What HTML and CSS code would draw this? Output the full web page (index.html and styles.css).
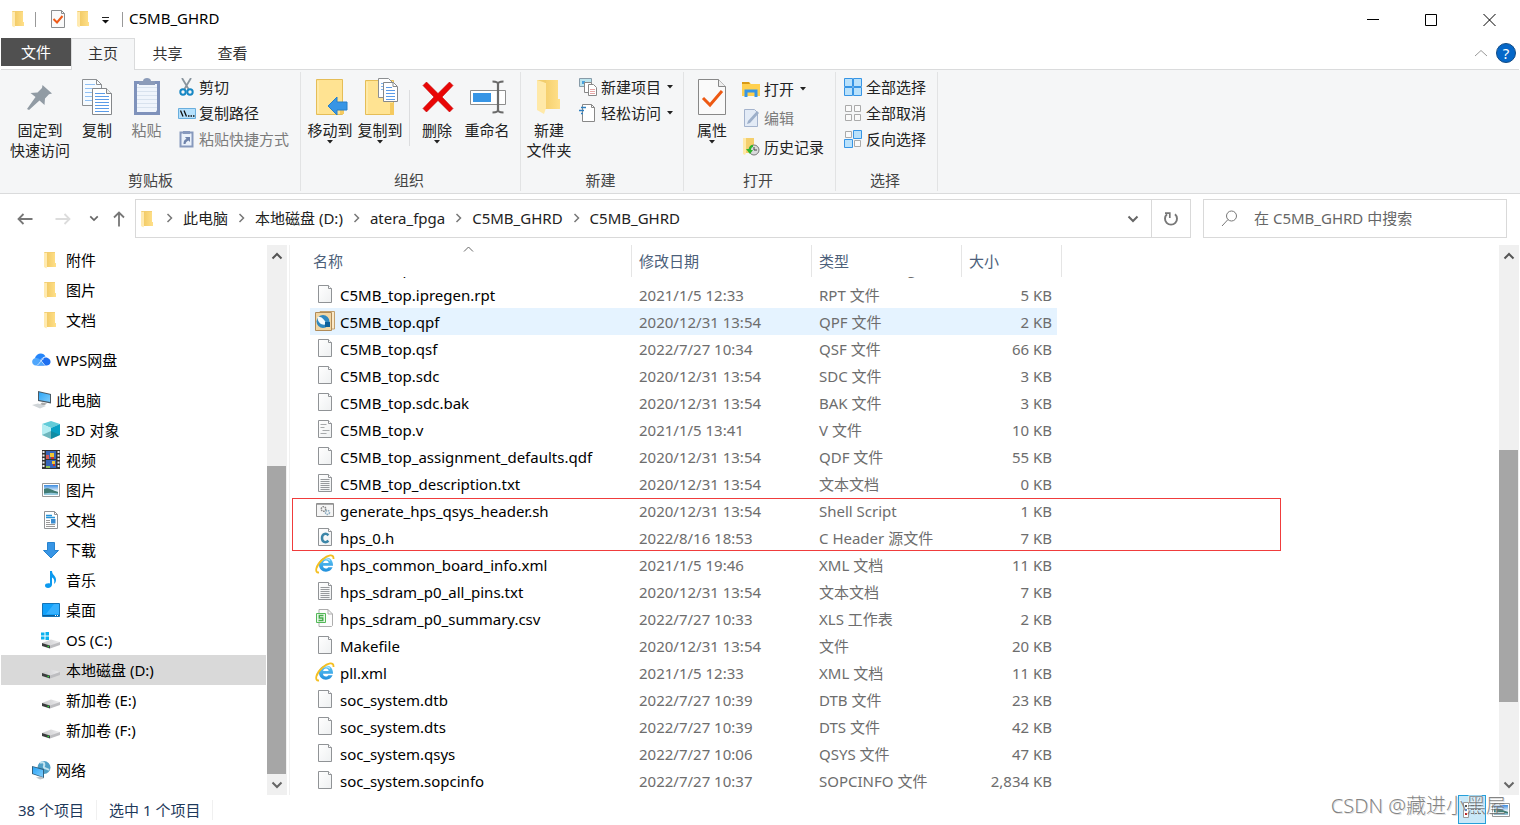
FILE: index.html
```html
<!DOCTYPE html>
<html lang="zh-CN">
<head>
<meta charset="utf-8">
<title>C5MB_GHRD</title>
<link rel="stylesheet" href="styles.css">
</head>
<body>
<svg class="sprite" aria-hidden="true">
  <defs>
    <linearGradient id="gFolder" x1="0" y1="0" x2="1" y2="0"><stop offset="0" stop-color="#f3cc68"/><stop offset="1" stop-color="#ffe08a"/></linearGradient>
    <linearGradient id="gPage" x1="0" y1="0" x2="1" y2="1"><stop offset="0" stop-color="#ffffff"/><stop offset="1" stop-color="#eef0f1"/></linearGradient>
    <linearGradient id="gBlue" x1="0" y1="0" x2="1" y2="1"><stop offset="0" stop-color="#2ba5f7"/><stop offset="1" stop-color="#7fccfb"/></linearGradient>
    <linearGradient id="gSky" x1="0" y1="0" x2="0" y2="1"><stop offset="0" stop-color="#3b8be0"/><stop offset=".6" stop-color="#e8f4fb"/><stop offset="1" stop-color="#3d7a86"/></linearGradient>
    <linearGradient id="gDisk" x1="0" y1="0" x2="1" y2="0"><stop offset="0" stop-color="#c9c9cb"/><stop offset="1" stop-color="#ececee"/></linearGradient>
    <linearGradient id="gIe" x1="0" y1="0" x2="0" y2="1"><stop offset="0" stop-color="#63c8f5"/><stop offset="1" stop-color="#1f8fdc"/></linearGradient>
  </defs>
  <symbol id="folder" viewBox="0 0 18 18"><path d="M6 1h8v11h1v4H6z" fill="url(#gFolder)"/><path d="M3 1h3v14l-.5 2.600L3 16z" fill="#ffeab0"/><path d="M3 1h11v.7H6L4 2z" fill="#f2cd70"/></symbol>
  <symbol id="page" viewBox="0 0 18 18"><path d="M2.500.5h10l3 3v14h-13z" fill="url(#gPage)" stroke="#909396"/><path d="M12.500.5v3h3" fill="#fff" stroke="#909396"/></symbol>
  <symbol id="pagelines" viewBox="0 0 18 18"><use href="#page"/><path d="M4.500 5.500h9M4.500 7.500h9M4.500 9.500h9M4.500 11.500h9M4.500 13.500h9M4.500 15.500h9" stroke="#979a9d"/></symbol>
  <symbol id="pagecode" viewBox="0 0 18 18"><use href="#page"/><path d="M4.500 4.500h6M4.500 7.500h4M6.500 10.500h7M4.500 13.500h6" stroke="#a6a9ab"/></symbol>
  <symbol id="check" viewBox="0 0 18 20"><path d="M2.500 1.500h10l3 3v14h-13z" fill="#fafafa" stroke="#8b8d8f"/><path d="M12.500 1.500v3h3" fill="none" stroke="#8b8d8f"/><path d="M4.500 10l3.500 3.500L13.500 7" fill="none" stroke="#ee5a18" stroke-width="2"/></symbol>
  <symbol id="disk" viewBox="0 0 20 18"><path d="M1 12l9-3.500 9 2.500-9 4z" fill="url(#gDisk)"/><path d="M1 12l8 2.500v3L1 15z" fill="#3a3d3e"/><path d="M9 14.500l10-3.500v3l-10 3.500z" fill="#bdbdc0"/><path d="M6.500 14.800h1.500v1.500H6.500z" fill="#2fd43a"/></symbol>
  <symbol id="chev" viewBox="0 0 8 10"><path d="M1.500 1l4 4-4 4" fill="none" stroke="#777" stroke-width="1.500"/></symbol>
  <symbol id="down" viewBox="0 0 12 8"><path d="M1.500 1.500L6 6l4.500-4.500" fill="none" stroke="#666" stroke-width="2"/></symbol>
  <symbol id="up" viewBox="0 0 12 8"><path d="M1.500 6.500L6 2l4.500 4.500" fill="none" stroke="#555" stroke-width="2"/></symbol>
  <symbol id="tri" viewBox="0 0 6 4"><path d="M0 0h6L3 3.500z" fill="#222"/></symbol>
  <symbol id="ie" viewBox="0 0 20 20"><path d="M11 3.500a7 7 0 0 0-7 7.200c0 4 3 7 7 7 3.200 0 5.500-1.600 6.600-4.400h-4.300c-.5.8-1.300 1.200-2.400 1.200-1.700 0-2.800-1-2.900-2.700h10C18.200 6.800 15.500 3.500 11 3.500zM8.100 9c.3-1.500 1.400-2.400 2.900-2.400s2.500.9 2.700 2.400z" fill="url(#gIe)" fill-rule="evenodd"/><path d="M6 7.500c1.500-3 6-4 9-1" fill="none" stroke="#b4e8ff" stroke-width="1.200"/><path d="M4 18.500C-1 19 1 11 7.500 5.500 12.500 1.200 19-.8 18.500 5" fill="none" stroke="#f4bf22" stroke-width="1.800"/></symbol>
  <symbol id="photo" viewBox="0 0 18 14"><path d="M.5.5h17v13H.5z" fill="#fff" stroke="#999"/><path d="M2 2h14v10H2z" fill="url(#gSky)"/><path d="M2 6c4-2 7 1 14 3v3H2z" fill="#417c74"/><path d="M2 10.500c5-1 9-1 14 0V12H2z" fill="#94c9dd"/></symbol>
</svg>

<header class="titlebar">
  <svg class="i18"><use href="#folder"/></svg><span class="bar"></span>
  <svg class="i20"><use href="#check"/></svg>
  <svg class="i18"><use href="#folder"/></svg>
  <svg class="qat" viewBox="0 0 8 7"><path d="M0 .5h7" stroke="#222"/><path d="M0 3h7L3.500 6.500z" fill="#111"/></svg>
  <span class="bar bar2"></span>
  <h1>C5MB_GHRD</h1>
  <div class="winbtns">
    <button aria-label="最小化"><svg viewBox="0 0 13 13"><path d="M0 6.500h12" stroke="#000"/></svg></button>
    <button aria-label="最大化"><svg viewBox="0 0 13 13"><path d="M.5 1.500h11v11H.5z" fill="none" stroke="#000"/></svg></button>
    <button aria-label="关闭"><svg viewBox="0 0 13 13"><path d="M.5 1l12 12M12.500 1l-12 12" stroke="#000" fill="none"/></svg></button>
  </div>
</header>

<div class="tabs">
  <button class="tab file">文件</button>
  <button class="tab active">主页</button>
  <button class="tab">共享</button>
  <button class="tab">查看</button>
  <div class="help">
    <button aria-label="折叠功能区"><svg width="14" height="8" viewBox="0 0 14 8"><path d="M1 7l6-5.500L13 7" fill="none" stroke="#999"/></svg></button>
    <button class="q" aria-label="帮助">?</button>
  </div>
</div>

<section class="ribbon">
  <div class="group clip">
    <div class="tools">
      <button class="big w78"><span class="ico"><svg width="30" height="30" viewBox="0 0 30 30"><path d="M17.500 3L27 11.500l-3 .8-4 4.200-.5 6.500-5-4.500L4 28l-2-1 8.500-12L5.500 11l7-.5 4.500-4.500z" fill="#919ba4"/></svg></span><span>固定到</span><span>快速访问</span></button>
      <button class="big w36"><span class="ico"><svg width="32" height="38" viewBox="0 0 32 38"><path d="M1.500 1.500h14l5 5v21h-19z" fill="#f6fbff" stroke="#8c8f92"/><path d="M15.500 1.500v5h5" fill="none" stroke="#8c8f92"/><path d="M4 6.500h10M4 10.500h13M4 14.500h13M4 18.500h13M4 22.500h13" stroke="#8fc0f5"/><path d="M11.500 10.500h14l5 5v21h-19z" fill="#fff" stroke="#85888b"/><path d="M25.500 10.500v5h5" fill="#eee" stroke="#85888b"/><path d="M14 15.500h10M14 18.500h14M14 21.500h14M14 24.500h14M14 27.500h14M14 30.500h14M14 33.500h14" stroke="#5a9be8"/></svg></span><span>复制</span></button>
      <button class="big w64 off"><span class="ico"><svg width="28" height="38" viewBox="0 0 28 38"><path d="M1 3h26v34H1z" fill="#7f92bb"/><path d="M4 6h20v26l-1 2H4z" fill="#f0f5fc"/><path d="M4 9.500h20M4 13.500h20M4 17.500h20M4 21.500h20M4 25.500h20M4 29.500h20" stroke="#d8e2ee"/><path d="M6 3h4c0-4 8-4 8 0h4v4H6z" fill="#8b9bb9"/></svg></span><span>粘贴</span></button>
      <div class="smalls">
        <button><svg class="i18" viewBox="0 0 18 18"><path d="M4 0l6.500 11M13 0L6.500 11" stroke="#8a959e" stroke-width="1.800"/><circle cx="5" cy="14" r="2.700" fill="none" stroke="#1787c4" stroke-width="2"/><circle cx="12" cy="14" r="2.700" fill="none" stroke="#1787c4" stroke-width="2"/></svg>剪切</button>
        <button><svg class="i18" viewBox="0 0 18 18"><path d="M.5 4.500h17v10H.5z" fill="#b5e0fc" stroke="#69aedd"/><path d="M2.500 6.500l2.500 6M6 6.500l2.500 6" stroke="#111" stroke-width="1.300"/><path d="M10 12h1.500M12.500 12H14M15 12h1.500" stroke="#111" stroke-width="1.500"/></svg>复制路径</button>
        <button class="off"><svg class="i18" viewBox="0 0 18 18"><path d="M2.500 2.500h12v14h-12z" fill="#eaf1fa" stroke="#8799bd" stroke-width="2"/><path d="M5 1h7v3H5z" fill="#8799bd"/><path d="M5.500 14c0-3 1-4.500 3-5L7 7h5v5l-1.500-1.500C8.500 11.500 8 12 7.500 14z" fill="#6f83ab"/></svg>粘贴快捷方式</button>
      </div>
    </div>
    <h2>剪贴板</h2>
  </div>

  <div class="group org">
    <div class="tools">
      <button class="big w50"><span class="ico"><svg width="34" height="38" viewBox="0 0 34 38"><path d="M2.500 1.500h26v35h-26z" fill="#ffe392" stroke="#e5bd57"/><path d="M4 3v32" stroke="#fff1bd"/><path d="M26 24h4v12h-4z" fill="#f5ca60"/><path d="M14 28l9-9v5h10v8H23v5z" fill="#3795e5" stroke="#267fc9"/></svg></span><span>移动到</span><svg class="tri"><use href="#tri"/></svg></button>
      <button class="big w50"><span class="ico"><svg width="34" height="40" viewBox="0 0 34 40"><path d="M1.500 3.500h28v34h-28z" fill="#ffe392" stroke="#e5bd57"/><path d="M3 5v32" stroke="#fff1bd"/><path d="M26 26h4v12h-4z" fill="#f5ca60"/><path d="M14.500 1.500h10l4 4v15h-14z" fill="#fff" stroke="#8c8f92"/><path d="M17 6.500h6M17 9.500h6M17 12.500h6" stroke="#7fb3ee"/><path d="M19.500 5.500h10l4 4v15h-14z" fill="#fff" stroke="#85888b"/><path d="M29 5.500v4h4" fill="none" stroke="#85888b"/><path d="M22 10.500h6M22 13.500h9M22 16.500h9M22 19.500h9M22 22.500h9" stroke="#5a9be8"/></svg></span><span>复制到</span><svg class="tri"><use href="#tri"/></svg></button>
      <span class="split"></span>
      <button class="big w50"><span class="ico"><svg width="32" height="34" viewBox="0 0 32 34"><path d="M4.500 2L16 13.500 27.500 2 31 5.500 20 17l11 11.500-3.500 3.500L16 20.500 4.500 32 1 28.500 12 17 1 5.500z" fill="#e90606" stroke="#c30000" stroke-width=".6"/></svg></span><span>删除</span><svg class="tri"><use href="#tri"/></svg></button>
      <button class="big w50"><span class="ico"><svg width="36" height="36" viewBox="0 0 36 36"><path d="M.5 11.500h35v14H.5z" fill="#fff" stroke="#8d8d8d"/><path d="M3 14h18v9H3z" fill="#3795e5"/><path d="M22.500 2.500c4 0 5.500.5 5.500 3v25c0 2.500-1.500 3-5.500 3M33.500 2.500c-4 0-5.500.5-5.500 3v25c0 2.500 1.500 3 5.500 3" fill="none" stroke="#6a6a6a" stroke-width="2.200"/></svg></span><span>重命名</span></button>
    </div>
    <h2>组织</h2>
  </div>

  <div class="group new">
    <div class="tools">
      <button class="big w56"><span class="ico"><svg width="26" height="36" viewBox="0 0 26 36"><path d="M8 1h14v19h2v10H6z" fill="url(#gFolder)"/><path d="M1 1h3l6 3v25l-2 6-7-4z" fill="#ffe9a8"/><path d="M1 1h9v3z" fill="#f1cd6d"/></svg></span><span>新建</span><span>文件夹</span></button>
      <div class="smalls">
        <button><svg class="i18" viewBox="0 0 18 18"><path d="M.5.5h12v8H.5z" fill="#bde5ee" stroke="#879ba8"/><path d="M3 3h3v3H3z" fill="#4aa3de"/><path d="M5.500 4.500h7v10h-7z" fill="#fff" stroke="#888"/><path d="M9.500 6.500h5l3 3v8h-8z" fill="#fff" stroke="#888"/><path d="M11 11.500h5M11 13.500h5M11 15.500h5" stroke="#e6a6a6"/></svg>新建项目<svg class="tri"><use href="#tri"/></svg></button>
        <button><svg class="i18" viewBox="0 0 18 18"><path d="M3.500.5h9l3 3v14h-12z" fill="#fff" stroke="#888"/><path d="M12.500.5v3h3" fill="none" stroke="#888"/><path d="M2 3.500h5M0 6.500h5M2 9.500h2" stroke="#2e7fbf" stroke-width="1.500"/></svg>轻松访问<svg class="tri"><use href="#tri"/></svg></button>
      </div>
    </div>
    <h2>新建</h2>
  </div>

  <div class="group open">
    <div class="tools">
      <button class="big w56"><span class="ico"><svg width="30" height="38" viewBox="0 0 30 38"><path d="M1.500 1.500h20l7 7v28h-27z" fill="#fafafa" stroke="#888"/><path d="M21.500 1.500v7h7" fill="#eee" stroke="#888"/><path d="M6 20l7 7 12-14" fill="none" stroke="#ed5913" stroke-width="3"/></svg></span><span>属性</span><svg class="tri"><use href="#tri"/></svg></button>
      <div class="smalls loose">
        <button><svg class="i18" viewBox="0 0 18 18"><path d="M0 2h7l2 2h9v12H0z" fill="#ffd04f"/><path d="M0 2h7l1 2H0z" fill="#d99a16"/><path d="M4 17v-6h10v6" fill="none" stroke="#3795e5" stroke-width="3"/></svg>打开<svg class="tri"><use href="#tri"/></svg></button>
        <button class="off"><svg class="i18" viewBox="0 0 18 18"><path d="M2.500.5h10l3 3v14h-13z" fill="#e3ebf6" stroke="#a4b3cd"/><path d="M5 15l1-3L15 2l2 2L8 14z" fill="#9dafc9"/></svg>编辑</button>
        <button><svg class="i18" viewBox="0 0 18 18"><path d="M4 0h8v15H4z" fill="#f4cf6c"/><path d="M1 0h3v15l-1 2-2-1z" fill="#ffe9a8"/><circle cx="12" cy="12" r="5" fill="#d9dbdc" stroke="#777"/><path d="M12 9v3h3" fill="none" stroke="#444"/><path d="M11 7c-3 0-4 2-4 4H4l4 5 3-4H9c0-2 1-3 2-3z" fill="#2eb52b"/></svg>历史记录</button>
      </div>
    </div>
    <h2>打开</h2>
  </div>

  <div class="group sel">
    <div class="tools">
      <div class="smalls">
        <button><svg class="i18" viewBox="0 0 18 18"><path d="M.5.5h8v8h-8zM9.500.5h8v8h-8zM.5 9.500h8v8h-8zM9.500 9.500h8v8h-8z" fill="#b9e1fb" stroke="#3795e5"/></svg>全部选择</button>
        <button><svg class="i18" viewBox="0 0 18 18"><path d="M1.500 1.500h6v6h-6zM10.500 1.500h6v6h-6zM1.500 10.500h6v6h-6zM10.500 10.500h6v6h-6z" fill="#fafafa" stroke="#aaa"/></svg>全部取消</button>
        <button><svg class="i18" viewBox="0 0 18 18"><path d="M1.500 1.500h6v6h-6zM10.500 10.500h6v6h-6z" fill="#fafafa" stroke="#aaa"/><path d="M9.500.5h8v8h-8zM.5 9.500h8v8h-8z" fill="#b9e1fb" stroke="#3795e5"/></svg>反向选择</button>
      </div>
    </div>
    <h2>选择</h2>
  </div>
</section>

<div class="addrrow">
  <div class="navbtns">
    <button aria-label="后退"><svg width="16" height="12" viewBox="0 0 16 12"><path d="M15.500 6H1.500M6.500 1l-5 5 5 5" fill="none" stroke="#777" stroke-width="1.800"/></svg></button>
    <button aria-label="前进"><svg width="16" height="12" viewBox="0 0 16 12"><path d="M.5 6h14M9.500 1l5 5-5 5" fill="none" stroke="#dcdcdc" stroke-width="1.800"/></svg></button>
    <button aria-label="最近"><svg width="10" height="7"><use href="#down"/></svg></button>
    <button aria-label="上移"><svg width="12" height="16" viewBox="0 0 12 16"><path d="M6 15.500V1.500M1 6.500l5-5 5 5" fill="none" stroke="#777" stroke-width="1.800"/></svg></button>
  </div>
  <div class="address">
    <svg class="i18"><use href="#folder"/></svg>
    <svg class="chev"><use href="#chev"/></svg><a href="#pc">此电脑</a>
    <svg class="chev"><use href="#chev"/></svg><a href="#d">本地磁盘 (D:)</a>
    <svg class="chev"><use href="#chev"/></svg><a href="#fpga">atera_fpga</a>
    <svg class="chev"><use href="#chev"/></svg><a href="#g1">C5MB_GHRD</a>
    <svg class="chev"><use href="#chev"/></svg><a href="#g2">C5MB_GHRD</a>
    <button class="drop" aria-label="展开"><svg width="12" height="8"><use href="#down"/></svg></button>
    <button class="refresh" aria-label="刷新"><svg width="16" height="16" viewBox="0 0 16 16"><path d="M12 3.200A6 6 0 1 1 4 3.200" fill="none" stroke="#777" stroke-width="1.900"/><path d="M2 2.200h4.800v4.800" fill="none" stroke="#777" stroke-width="1.700"/></svg></button>
  </div>
  <label class="search"><svg width="17" height="17" viewBox="0 0 17 17"><circle cx="10.500" cy="6" r="5" fill="none" stroke="#777"/><path d="M7 9.500L1 16" stroke="#777"/></svg><input type="text" aria-label="搜索" placeholder="在 C5MB_GHRD 中搜索"></label>
</div>

<main>
  <nav>
    <ul>
      <li class="sub"><a href="#1"><svg class="i18"><use href="#folder"/></svg>附件</a></li>
      <li class="sub"><a href="#2"><svg class="i18"><use href="#folder"/></svg>图片</a></li>
      <li class="sub"><a href="#3"><svg class="i18"><use href="#folder"/></svg>文档</a></li>
    </ul>
    <ul>
      <li><a href="#4"><svg class="i20" viewBox="0 0 20 18"><path d="M5.500 14.500C8 12 10 7.500 14 6.500c3-.5 6 2 5.500 5-.4 2-2 3-4 3z" fill="#1e6ff0"/><path d="M4 7C5 2 12.500.5 14.500 5.500 11 6 8.500 10 7 12 7 9 6 7.500 4 7z" fill="#2585fa"/><path d="M4.500 7c3 0 4.500 1 6 3.500l3 4H5C.5 14.500-.5 8 4.500 7z" fill="#4fa6fc"/><path d="M6 14.500C9 12 10 9 13 7.500M9.500 9l4.500 5.500" stroke="#e7f4ff" stroke-width=".8" fill="none"/></svg>WPS网盘</a></li>
    </ul>
    <ul>
      <li><a href="#5"><svg class="i20" viewBox="0 0 20 18"><path d="M7 0l13 3v9.500L7 10z" fill="#4a5964"/><path d="M8 1.200l11 2.500v7.300L8 9z" fill="url(#gBlue)"/><path d="M11 11.500l5 1-3 2-4-1z" fill="#aaa"/><path d="M1 14l6-1.500 8 2.500-6 2.500z" fill="#d0d5d8"/></svg>此电脑</a></li>
      <li class="sub"><a href="#6"><svg class="i20" viewBox="0 0 20 20"><path d="M10 1l9 3-9 4-9-4z" fill="#62cbd8"/><path d="M1 4l9 4v11l-9-4z" fill="#b4edf2"/><path d="M19 4l-9 4v11l9-4z" fill="#08a0c4"/><path d="M1 15l9-4 9 4-9 4z" fill="#18747d" opacity=".45"/></svg>3D 对象</a></li>
      <li class="sub"><a href="#7"><svg class="i20" viewBox="0 0 20 20"><path d="M1 0h18v19H1z" fill="#333"/><path d="M2.500 1v17M17.500 1v17" stroke="#eee" stroke-width="2" stroke-dasharray="2 1.500"/><path d="M5 1h10v8H5zM5 10h10v8H5z" fill="#3766ba"/><path d="M5 5h3v4H5z" fill="#d55a57"/><path d="M9 3h4v4H9zM11 11h3v3h-3z" fill="#efc735"/><path d="M10 7h3v2h-3zM12 14h2v2h-2z" fill="#c63226"/><path d="M5 16h4v2H5z" fill="#8ec057"/></svg>视频</a></li>
      <li class="sub"><a href="#8"><svg class="i20" viewBox="-1 -3 20 20"><use href="#photo" width="18" height="14"/></svg>图片</a></li>
      <li class="sub"><a href="#9"><svg class="i20" viewBox="0 0 20 20"><path d="M3.500 1.500h10l3 3v14h-13z" fill="#fff" stroke="#909396"/><path d="M13.500 1.500v3h3" fill="none" stroke="#909396"/><path d="M5 5.500h6M5 7.500h9" stroke="#2493d9" stroke-width="1.300"/><path d="M5 10.500h4M5 12.500h4M5 14.500h9M5 16.500h9" stroke="#999"/><path d="M10 9h4.500v4.500H10z" fill="#3b8cd0"/></svg>文档</a></li>
      <li class="sub"><a href="#10"><svg class="i20" viewBox="0 0 20 20"><path d="M6.500 2.500h7v8h4L10 18l-7.500-7.500h4z" fill="#3795e5" stroke="#2783cf"/></svg>下载</a></li>
      <li class="sub"><a href="#11"><svg class="i20" viewBox="0 0 20 20"><path d="M9 1h2c0 4 4 4.500 4 9 0 2-1 3-2 4 1-4-.5-6-2-6.500v7c0 2-2 3.500-4 3.500s-3-1-3-2.500 2-2.500 5-2z" fill="#0c9aef"/></svg>音乐</a></li>
      <li class="sub"><a href="#12"><svg class="i20" viewBox="0 0 20 20"><path d="M1.500 3.500h17v13h-17z" fill="#12a1fa" stroke="#1374b8"/><path d="M13 4h5v10H5z" fill="#37b1ff"/><path d="M2 15.500h16" stroke="#0c5e99"/><path d="M14 15.500h1M16 15.500h1" stroke="#fff"/></svg>桌面</a></li>
      <li class="sub"><a href="#13"><svg class="i20" viewBox="0 0 20 18"><use href="#disk"/><path d="M0 1.500h3.500v3H0zM4.500 1H8v3.500H4.500zM0 5.500h3.500v3H0zM4.500 5.500H8V9H4.500z" fill="#0cb1ee"/></svg>OS (C:)</a></li>
      <li class="sub current"><a href="#14"><svg class="i20"><use href="#disk"/></svg>本地磁盘 (D:)</a></li>
      <li class="sub"><a href="#15"><svg class="i20"><use href="#disk"/></svg>新加卷 (E:)</a></li>
      <li class="sub"><a href="#16"><svg class="i20"><use href="#disk"/></svg>新加卷 (F:)</a></li>
    </ul>
    <ul>
      <li><a href="#17"><svg class="i20" viewBox="0 0 20 20"><circle cx="13" cy="7.500" r="6.500" fill="#4f9fc6"/><path d="M9 3c3-2 5 0 4 3s3 2 5 4" fill="none" stroke="#c3e4f0" stroke-width="2"/><path d="M1 6l12 3v9L1 14z" fill="#32617f"/><path d="M2 7l10 3v7L2 13.500z" fill="url(#gBlue)"/><path d="M5 17.500l5-1 3 2-4 1z" fill="#bfc5c9"/></svg>网络</a></li>
    </ul>
  </nav>
  <div class="scroll navscroll">
    <button aria-label="向上"><svg width="12" height="8"><use href="#up"/></svg></button>
    <div class="track"><div class="thumb"></div></div>
    <button aria-label="向下"><svg width="12" height="8"><use href="#down"/></svg></button>
  </div>

  <section class="files">
    <div class="head">
      <button class="c1">名称<svg class="sort" width="11" height="6" viewBox="0 0 11 6"><path d="M1 5.500L5.500 1 10 5.500" fill="none" stroke="#666"/></svg></button>
      <button class="c2">修改日期</button>
      <button class="c3">类型</button>
      <button class="c4">大小</button>
    </div>
    <div class="rows">
      <table>
        <colgroup><col class="n"><col class="d"><col class="t"><col class="s"></colgroup>
        <tbody>
        <tr><td><svg class="i18"><use href="#page"/></svg>C5MB_top.html</td><td>2021/1/5 13:42</td><td>Microsoft Edge</td><td>1 KB</td></tr>
        <tr><td><svg class="i18"><use href="#page"/></svg>C5MB_top.ipregen.rpt</td><td>2021/1/5 12:33</td><td>RPT 文件</td><td>5 KB</td></tr>
        <tr class="hover"><td><svg class="i20" viewBox="0 0 20 20"><path d="M5 .5h14.500V18H5z" fill="#fbe9c8" stroke="#c2a06d"/><path d="M.5 1.500h16v18H.5z" fill="#f1d6a4" stroke="#b08b58"/><circle cx="8" cy="10.500" r="6.500" fill="#2f88c0"/><path d="M2.500 6c4-1 7 3 9 7-3 2-9 0-9-7z" fill="#f4fafd"/><path d="M10 11h5v5h-5z" fill="#0c5f9a"/></svg>C5MB_top.qpf</td><td>2020/12/31 13:54</td><td>QPF 文件</td><td>2 KB</td></tr>
        <tr><td><svg class="i18"><use href="#page"/></svg>C5MB_top.qsf</td><td>2022/7/27 10:34</td><td>QSF 文件</td><td>66 KB</td></tr>
        <tr><td><svg class="i18"><use href="#page"/></svg>C5MB_top.sdc</td><td>2020/12/31 13:54</td><td>SDC 文件</td><td>3 KB</td></tr>
        <tr><td><svg class="i18"><use href="#page"/></svg>C5MB_top.sdc.bak</td><td>2020/12/31 13:54</td><td>BAK 文件</td><td>3 KB</td></tr>
        <tr><td><svg class="i18"><use href="#pagecode"/></svg>C5MB_top.v</td><td>2021/1/5 13:41</td><td>V 文件</td><td>10 KB</td></tr>
        <tr><td><svg class="i18"><use href="#page"/></svg>C5MB_top_assignment_defaults.qdf</td><td>2020/12/31 13:54</td><td>QDF 文件</td><td>55 KB</td></tr>
        <tr><td><svg class="i18"><use href="#pagelines"/></svg>C5MB_top_description.txt</td><td>2020/12/31 13:54</td><td>文本文档</td><td>0 KB</td></tr>
        <tr><td><svg class="i18" viewBox="0 0 18 18"><path d="M.5 2.500h17v13H.5z" fill="#f5f5f5" stroke="#8f8f8f"/><path d="M1 3.500h16" stroke="#aaa"/><circle cx="7.500" cy="8" r="2.300" fill="none" stroke="#888" stroke-width="1.500" stroke-dasharray="1.500 .7"/><circle cx="11.500" cy="11.500" r="2" fill="none" stroke="#8bacc1" stroke-width="1.500" stroke-dasharray="1.500 .7"/></svg>generate_hps_qsys_header.sh</td><td>2020/12/31 13:54</td><td>Shell Script</td><td>1 KB</td></tr>
        <tr><td><svg class="i18" viewBox="0 0 18 18"><use href="#page"/><path d="M12.500 7.200C9.500 4.500 6 6 6 10s3.500 5.500 6.500 2.800" fill="none" stroke="#3c86a8" stroke-width="2.500"/></svg>hps_0.h</td><td>2022/8/16 18:53</td><td>C Header 源文件</td><td>7 KB</td></tr>
        <tr><td><svg class="i20"><use href="#ie"/></svg>hps_common_board_info.xml</td><td>2021/1/5 19:46</td><td>XML 文档</td><td>11 KB</td></tr>
        <tr><td><svg class="i18"><use href="#pagelines"/></svg>hps_sdram_p0_all_pins.txt</td><td>2020/12/31 13:54</td><td>文本文档</td><td>7 KB</td></tr>
        <tr><td><svg class="i20" viewBox="0 0 20 20"><path d="M4 1.500h9l4.500 4.500v11.500l-1 1H4z" fill="#fcfcfc" stroke="#adadad"/><path d="M13 1.500V6h4.500" fill="none" stroke="#adadad"/><path d="M1.500 5.500h9v9h-9z" fill="#e8f7e8" stroke="#54b858"/><path d="M8.500 7.500H4.300V10h3.500v2.500H3.500" fill="none" stroke="#44ad49" stroke-width="1.400"/></svg>hps_sdram_p0_summary.csv</td><td>2022/7/27 10:33</td><td>XLS 工作表</td><td>2 KB</td></tr>
        <tr><td><svg class="i18"><use href="#page"/></svg>Makefile</td><td>2020/12/31 13:54</td><td>文件</td><td>20 KB</td></tr>
        <tr><td><svg class="i20"><use href="#ie"/></svg>pll.xml</td><td>2021/1/5 12:33</td><td>XML 文档</td><td>11 KB</td></tr>
        <tr><td><svg class="i18"><use href="#page"/></svg>soc_system.dtb</td><td>2022/7/27 10:39</td><td>DTB 文件</td><td>23 KB</td></tr>
        <tr><td><svg class="i18"><use href="#page"/></svg>soc_system.dts</td><td>2022/7/27 10:39</td><td>DTS 文件</td><td>42 KB</td></tr>
        <tr><td><svg class="i18"><use href="#page"/></svg>soc_system.qsys</td><td>2022/7/27 10:06</td><td>QSYS 文件</td><td>47 KB</td></tr>
        <tr><td><svg class="i18"><use href="#page"/></svg>soc_system.sopcinfo</td><td>2022/7/27 10:37</td><td>SOPCINFO 文件</td><td>2,834 KB</td></tr>
        </tbody>
      </table>
    </div>
    <div class="mark"></div>
  </section>
  <div class="scroll filescroll">
    <button aria-label="向上"><svg width="12" height="8"><use href="#up"/></svg></button>
    <div class="track"><div class="thumb"></div></div>
    <button aria-label="向下"><svg width="12" height="8"><use href="#down"/></svg></button>
  </div>
</main>

<footer>
  <span class="stat">38 个项目</span><span class="stat">选中 1 个项目</span>
  <div class="views">
    <button class="on" aria-label="详细信息"><svg width="20" height="18" viewBox="0 0 20 18"><path d="M1.500 1.500h5v15h-5z" fill="#fff" stroke="#999"/><path d="M3 4h2v2H3z" fill="#555"/><path d="M3 8h2v2H3z" fill="#4c87c9"/><path d="M3 12h2v2H3z" fill="#b22"/><path d="M9 4.500h3M13 4.500h2M16 4.500h3M9 8.500h3M13 8.500h2M16 8.500h3M9 12.500h3M13 12.500h2M16 12.500h3" stroke="#777"/></svg></button>
    <button aria-label="大缩略图"><svg width="18" height="14"><use href="#photo"/></svg></button>
  </div>
  <span class="watermark">CSDN @藏进小黑屋</span>
</footer>
</body>
</html>
```
FILE: styles.css
```css
* { box-sizing: border-box; }
body {
  margin: 0; min-height: 100vh; display: flex; flex-direction: column;
  font: 15px/20px "Noto Sans", "Noto Sans CJK SC", sans-serif;
  color: #000; background: #fff; padding: 0 1px;
}
button { font: inherit; color: inherit; background: none; border: 0; padding: 0; margin: 0; }
a { color: inherit; text-decoration: none; }
h1, h2 { margin: 0; font-size: 15px; font-weight: 400; }
svg { flex: none; display: block; }
ul { list-style: none; margin: 0; padding: 0; }
.sprite { position: absolute; width: 0; height: 0; }
.i18 { width: 18px; height: 18px; }
.i20 { width: 20px; height: 20px; }
.tri { width: 6px; height: 4px; }

.titlebar { height: 38px; display: flex; align-items: center; padding-left: 8px; }
.titlebar h1 { padding-bottom: 2px; }
.bar { width: 1px; height: 15px; background: #999; margin: 0 12px 0 8px; }
.titlebar .i20 + .i18 { margin-left: 6px; }
.qat { width: 8px; height: 7px; margin: 3px 0 0 10px; }
.bar2 { margin: 0 6px 0 12px; }
.winbtns { margin-left: auto; display: flex; padding-right: 1px; }
.winbtns button { width: 58px; height: 37px; display: grid; place-items: center; }
.winbtns svg { width: 13px; height: 13px; }

.tabs { height: 32px; display: flex; align-items: stretch; border-bottom: 1px solid #dadbdc; color: #333; }
.tab { width: 65px; padding-bottom: 2px; }
.tab.file { width: 70px; background: #505050; color: #fff; margin-bottom: 3px; padding: 0; }
.tab.active { width: 64px; background: #f5f6f7; border: 1px solid #dadbdc; border-bottom: 0; margin-bottom: -1px; padding-bottom: 4px; }
.help { margin-left: auto; display: flex; align-items: center; gap: 8px; padding: 0 3px 2px 0; }
.q { width: 20px; height: 20px; border-radius: 50%; background: #0567c8; border: 1px solid #124b84; color: #fff; line-height: 18px; }

.ribbon { display: flex; background: #f5f6f7; border-bottom: 1px solid #dadbdc; margin: 0 -1px; padding: 2px 0 2px 1px; color: #222; }
.group { height: 119px; border-right: 1px solid #e2e3e4; display: flex; flex-direction: column; }
.group h2 { text-align: center; margin-top: auto; color: #444; padding: 0 3px 1px 0; }
.clip h2 { padding-right: 0; }
.tools { display: flex; align-items: flex-start; padding-top: 2px; }
.big { display: flex; flex-direction: column; align-items: center; white-space: nowrap; }
.ico { height: 46px; display: grid; place-items: center; }
.w36 { width: 36px; } .w50 { width: 50px; } .w56 { width: 56px; } .w64 { width: 63px; } .w78 { width: 78px; }
.off { color: #7b7b7b; }
.smalls { display: flex; flex-direction: column; }
.smalls button { height: 26px; display: flex; align-items: center; gap: 4px; white-space: nowrap; }
.smalls .tri { margin-left: 2px; }
.loose { padding: 0 0 0 2px; }
.loose button { height: 29px; }
.clip { width: 300px; }
.clip .smalls button { gap: 3px; }
.org { width: 220px; }
.org .tools { padding-left: 4px; }
.org .ico { padding-left: 2px; }
.split { width: 1px; height: 56px; background: #dcdddf; margin: 16px 2px 0 4px; }
.new { width: 163px; }
.new .smalls { padding-left: 2px; }
.open { width: 152px; }
.sel { width: 102px; }
.sel .tools { padding-left: 8px; }

.addrrow { display: flex; height: 51px; padding: 5px 12px 7px 0; color: #222; }
.navbtns { display: flex; width: 134px; align-items: center; padding-left: 16px; }
.navbtns button:nth-child(2) { margin-left: 22px; }
.navbtns button:nth-child(3) { margin-left: 18px; }
.navbtns button:nth-child(4) { margin-left: 14px; }
.address { flex: 1; display: flex; align-items: center; border: 1px solid #d9d9d9; padding-left: 2px; }
.address a { white-space: nowrap; padding-bottom: 2px; }
.chev { width: 8px; height: 10px; margin: 0 9px 2px 10px; }
.drop { margin-left: auto; width: 36px; height: 100%; display: grid; place-items: center; }
.refresh { width: 39px; height: 100%; border-left: 1px solid #d9d9d9; display: grid; place-items: center; }
.search { width: 304px; margin-left: 12px; border: 1px solid #d9d9d9; display: flex; align-items: center; padding-left: 17px; gap: 16px; }
.search input { border: 0; outline: 0; padding: 0 0 2px; flex: 1; min-width: 0; font: inherit; color: #666; background: none; }
.search input::placeholder { color: #666; opacity: 1; }

main { flex: 1; display: flex; min-height: 0; }
nav { width: 265px; display: flex; flex-direction: column; gap: 10px; }
nav a { height: 30px; display: flex; align-items: center; gap: 5px; padding-left: 30px; white-space: nowrap; }
nav .sub a { padding-left: 40px; }
nav .sub .i18 { margin-right: 2px; }
nav .current { background: #d9d9d9; }
.scroll { width: 20px; background: #f0f0f0; display: flex; flex-direction: column; margin-left: 1px; }
.scroll button { height: 21px; display: grid; place-items: center; padding-right: 1px; }
.track { flex: 1; display: flex; flex-direction: column; }
.thumb { background: #a6a6a6; width: 19px; }
.navscroll .thumb { height: 308px; margin-top: auto; }
.filescroll .thumb { height: 252px; margin-top: 184px; }
.files { flex: 1; min-width: 0; margin-left: 2px; border-left: 1px solid #f0f0f0; display: flex; flex-direction: column; position: relative; }
.head { display: flex; height: 32px; color: #4c607a; padding-left: 16px; }
.head button { text-align: left; padding-left: 7px; border-right: 1px solid #e5e5e5; position: relative; }
.c1 { width: 326px; } .c2 { width: 180px; } .c3 { width: 150px; } .c4 { width: 100px; }
.sort { position: absolute; left: 157px; top: 1px; }
.rows { height: 517px; overflow: hidden; display: flex; flex-direction: column; justify-content: flex-end; padding-left: 20px; }
table { border-collapse: collapse; table-layout: fixed; width: 747px; flex: none; }
.n { width: 321px; } .d { width: 180px; } .t { width: 150px; } .s { width: 96px; }
tr { height: 27px; }
td { padding: 0 0 0 8px; height: 27px; color: #6d6d6d; white-space: nowrap; line-height: 20px; }
td:first-child { display: flex; align-items: center; gap: 6px; padding-left: 6px; color: #000; }
td svg { margin-bottom: 2px; }
td .i20 { margin: 0 -1px 2px; }
td:last-child { text-align: right; padding-right: 5px; }
.hover { background: #e5f3ff; }
.mark { position: absolute; left: 2px; top: 253px; width: 989px; height: 53px; border: 1px solid #f03c3c; }

footer { height: 30px; display: flex; align-items: center; color: #1e395b; position: relative; padding: 0 9px 1px 0; }
.stat { padding: 0 12px 0 17px; border-right: 1px solid #f0f0f0; line-height: 20px; }
.stat + .stat { padding-left: 12px; }
.views { margin-left: auto; display: flex; align-items: center; gap: 6px; }
.views .on { width: 28px; height: 29px; background: #c9e8f8; border: 1px solid #26a0da; display: grid; place-items: center; }
.watermark { position: absolute; right: 13px; top: 0; font-size: 20px; line-height: 22px; font-weight: 300; color: rgba(110,110,110,.85); text-shadow: -1px -1px 0 rgba(255,255,255,.7), 1px 1px 0 rgba(150,150,150,.3); white-space: nowrap; }
```
